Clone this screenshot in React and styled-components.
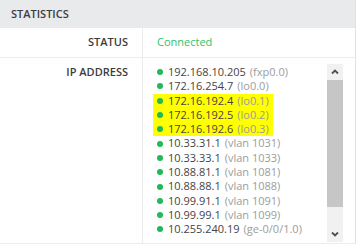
import React from 'react';
import styled, { createGlobalStyle } from 'styled-components';

const Global = createGlobalStyle`
  html, body { margin: 0; padding: 0; background: #fff; }
  body {
    font-family: "Open Sans", "Liberation Sans", sans-serif;
    font-size: 11px;
    color: #444;
  }
`;

const Panel = styled.section`
  width: 356px;
  box-sizing: border-box;
  border-right: 1px solid #e2e2e2;
  background: #fff;
`;

const Header = styled.header`
  height: 28px;
  display: flex;
  align-items: center;
  padding-left: 11px;
  background: #e9eaeb;
  font-weight: 600;
  color: #3c3c3c;
  line-height: 14.3px;
`;

const Row = styled.div`
  display: grid;
  grid-template-columns: 143px 1fr;
  height: ${(p) => p.$height}px;
  border-bottom: 1px solid #ececec;
`;

const Label = styled.div`
  box-sizing: border-box;
  border-right: 1px solid #ececec;
  display: flex;
  justify-content: flex-end;
  align-items: ${(p) => (p.$top ? 'flex-start' : 'center')};
  padding: ${(p) => (p.$top ? '7px 14px 0 0' : '0 14px 0 0')};
  font-weight: 600;
  color: #3c3c3c;
  line-height: 14.3px;
`;

const Value = styled.div`
  display: flex;
  align-items: center;
  padding-left: 14px;
  line-height: 14.3px;
  color: ${(p) => p.$color || '#444'};
`;

const ListCell = styled.div`
  display: flex;
  padding: 6px 12px 0 10px;
  min-height: 0;
`;

const List = styled.ul`
  flex: 1;
  list-style: none;
  margin: 0;
  padding: 1px 0 0 0;
  display: flex;
  flex-direction: column;
  align-items: flex-start;
  overflow: hidden;
`;

const Item = styled.li`
  display: flex;
  align-items: center;
  padding: 0 4px;
  line-height: 14.3px;
  background: ${(p) => (p.$hl ? '#ffff00' : 'transparent')};
  color: #444;
`;

const Dot = styled.span`
  width: 6px;
  height: 6px;
  border-radius: 50%;
  background: #1fb955;
  margin-right: 5px;
  flex: none;
`;

const Iface = styled.span`
  color: #9c9c9c;
  margin-left: 4px;
`;

const Scrollbar = styled.div`
  width: 16px;
  height: 178px;
  display: flex;
  flex-direction: column;
  background: #f1f1f1;
  flex: none;
`;

const ScrollButton = styled.div`
  height: 16px;
  display: flex;
  align-items: center;
  justify-content: center;
  flex: none;
`;

const Thumb = styled.div`
  height: 127px;
  background: #c6c6c6;
  flex: none;
`;

const Track = styled.div`
  flex: 1;
`;

const Chevron = ({ down }) => (
  <svg width="8" height="6" viewBox="0 0 8 6">
    <path
      d={down ? 'M1 1.5 L4 4.5 L7 1.5' : 'M1 4.5 L4 1.5 L7 4.5'}
      fill="none"
      stroke="#505050"
      strokeWidth="1.8"
    />
  </svg>
);

const addresses = [
  ['192.168.10.205', 'fxp0.0'],
  ['172.16.254.7', 'lo0.0'],
  ['172.16.192.4', 'lo0.1', true],
  ['172.16.192.5', 'lo0.2', true],
  ['172.16.192.6', 'lo0.3', true],
  ['10.33.31.1', 'vlan 1031'],
  ['10.33.33.1', 'vlan 1033'],
  ['10.88.81.1', 'vlan 1081'],
  ['10.88.88.1', 'vlan 1088'],
  ['10.99.91.1', 'vlan 1091'],
  ['10.99.99.1', 'vlan 1099'],
  ['10.255.240.19', 'ge-0/0/1.0'],
];

export default function App() {
  return (
    <>
      <Global />
      <Panel>
        <Header>STATISTICS</Header>
        <Row $height={29}>
          <Label>STATUS</Label>
          <Value $color="#2cc467">Connected</Value>
        </Row>
        <Row $height={185}>
          <Label $top>IP ADDRESS</Label>
          <ListCell>
            <List>
              {addresses.map(([ip, iface, hl]) => (
                <Item key={ip} $hl={hl}>
                  <Dot />
                  {ip}
                  <Iface>({iface})</Iface>
                </Item>
              ))}
            </List>
            <Scrollbar>
              <ScrollButton>
                <Chevron />
              </ScrollButton>
              <Thumb />
              <Track />
              <ScrollButton>
                <Chevron down />
              </ScrollButton>
            </Scrollbar>
          </ListCell>
        </Row>
      </Panel>
    </>
  );
}
